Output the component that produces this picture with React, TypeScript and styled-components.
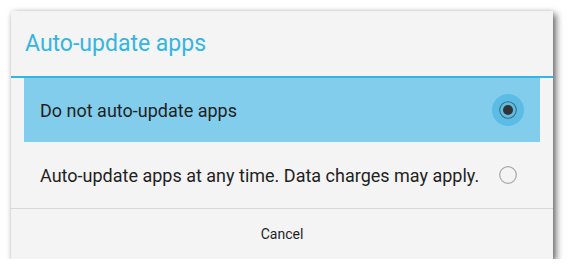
import React from "react";
import styled, { createGlobalStyle } from "styled-components";

const Global = createGlobalStyle`
  html, body { margin: 0; padding: 0; background: #ffffff; }
  body { font-family: Roboto, "Noto Sans", sans-serif; }
`;

const Page = styled.div`
  padding: 11px 0 0 11px;
`;

const Dialog = styled.div`
  width: 542px;
  height: 248px;
  background: #f4f4f4;
  box-shadow: 3px 3px 7px rgba(0, 0, 0, 0.6), 0 0 4px rgba(0, 0, 0, 0.08);
  display: flex;
  flex-direction: column;
`;

const Title = styled.div`
  height: 67px;
  box-sizing: border-box;
  padding: 0 0 1px 14px;
  display: flex;
  align-items: center;
  font-size: 23px;
  color: #33b5e5;
  border-bottom: 2px solid #33b5e5;
`;

const List = styled.div`
  padding: 0 13px;
  display: flex;
  flex-direction: column;
  height: 130px;
`;

const Row = styled.div<{ $selected?: boolean; $h: number }>`
  height: ${(p) => p.$h}px;
  display: flex;
  align-items: center;
  justify-content: space-between;
  padding: 0 16px;
  background: ${(p) => (p.$selected ? "#82cdeb" : "transparent")};
  font-size: 18px;
  color: #1f1f1f;
`;

const RadioWrap = styled.div`
  width: 32px;
  height: 32px;
  display: flex;
  align-items: center;
  justify-content: center;
  margin-left: 8px;
  flex: none;
`;

const Radio = ({ checked }: { checked: boolean }) => (
  <RadioWrap>
    <svg width="32" height="32" viewBox="0 0 32 32">
      {checked ? (
        <>
          <circle cx="16" cy="16" r="16" fill="#5bbde6" />
          <circle cx="16" cy="16" r="8.3" fill="none" stroke="#4a6878" strokeWidth="1.1" />
          <circle cx="16" cy="16" r="5" fill="#333" />
        </>
      ) : (
        <circle cx="16" cy="16" r="8.3" fill="none" stroke="#a8a8a8" strokeWidth="1.2" />
      )}
    </svg>
  </RadioWrap>
);

const Footer = styled.div`
  border-top: 1px solid #d8d8d8;
  flex: 1;
  display: flex;
  align-items: center;
  justify-content: center;
  font-size: 14px;
  color: #1f1f1f;
`;

export default function App() {
  return (
    <>
      <Global />
      <Page>
        <Dialog>
          <Title>Auto-update apps</Title>
          <List>
            <Row $selected $h={64}>
              <span>Do not auto-update apps</span>
              <Radio checked />
            </Row>
            <Row $h={66}>
              <span>Auto-update apps at any time. Data charges may apply.</span>
              <Radio checked={false} />
            </Row>
          </List>
          <Footer>Cancel</Footer>
        </Dialog>
      </Page>
    </>
  );
}
